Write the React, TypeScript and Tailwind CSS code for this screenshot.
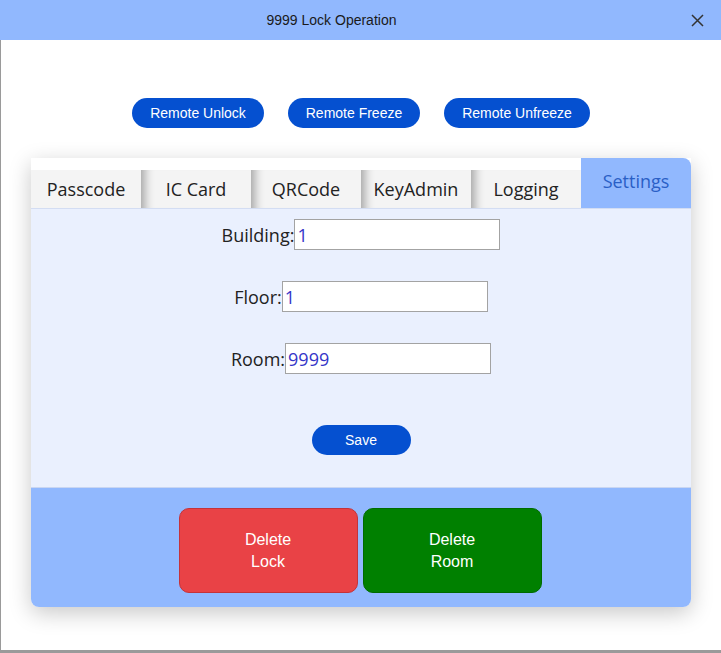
import { useState } from 'react';

const tabs = ['Passcode', 'IC Card', 'QRCode', 'KeyAdmin', 'Logging', 'Settings'];

export default function App() {
  const [active, setActive] = useState('Settings');
  const [building, setBuilding] = useState('1');
  const [floor, setFloor] = useState('1');
  const [room, setRoom] = useState('9999');

  const fields = [
    { label: 'Building:', value: building, set: setBuilding },
    { label: 'Floor:', value: floor, set: setFloor },
    { label: 'Room:', value: room, set: setRoom },
  ];

  return (
    <div className="w-[721px] h-[653px] bg-white flex flex-col font-['Liberation_Sans',Arial,sans-serif]">
      {/* Title bar */}
      <div className="h-10 shrink-0 bg-[#91b8fe] flex items-center">
        <div className="flex-1 text-center text-sm text-[#1a1a1a]">9999 Lock Operation</div>
        <div className="w-[58px] flex justify-end pr-[17px]">
          <svg width="13" height="13" viewBox="0 0 13 13" className="text-[#333]">
            <path d="M1 1 L12 12 M12 1 L1 12" stroke="currentColor" strokeWidth="1.5" />
          </svg>
        </div>
      </div>

      <div className="flex-1 flex flex-col border-l border-b-[3px] border-[#9a9a9a]">
        {/* Remote buttons */}
        <div className="flex justify-center gap-6 pt-[58px]">
          <button className="w-[132px] h-[30px] rounded-full bg-[#0550d0] text-white text-sm">Remote Unlock</button>
          <button className="w-[132px] h-[30px] rounded-full bg-[#0550d0] text-white text-sm">Remote Freeze</button>
          <button className="w-[146px] h-[30px] rounded-full bg-[#0550d0] text-white text-sm">Remote Unfreeze</button>
        </div>

        {/* Card */}
        <div className="mx-[30px] mt-[30px] flex flex-col rounded-b-lg shadow-[0_6px_22px_rgba(0,0,0,0.22)]">
          <div className="grid grid-cols-6 h-[50px] items-end font-['Open_Sans',sans-serif] text-lg">
            {tabs.map((t, i) =>
              t === active ? (
                <button
                  key={t}
                  onClick={() => setActive(t)}
                  className="h-[50px] bg-[#91b8fe] rounded-tr-lg text-[#2a5fc6] flex justify-center pt-[9px]"
                >
                  {t}
                </button>
              ) : (
                <button
                  key={t}
                  onClick={() => setActive(t)}
                  className={`h-[38px] bg-[#f4f4f4] text-[#222] flex items-center justify-center ${
                    i > 0 ? 'shadow-[inset_13px_0_10px_-9px_rgba(0,0,0,0.32)]' : ''
                  }`}
                >
                  {t}
                </button>
              )
            )}
          </div>

          <div className="bg-[#eaf0fe] border-t border-[#d3ddf3] h-[279px] flex flex-col items-center pt-[10px] font-['Open_Sans',sans-serif] text-lg text-[#222]">
            <div className="flex flex-col items-center gap-[31px]">
              {fields.map((f) => (
                <div key={f.label} className="flex items-center">
                  <span>{f.label}</span>
                  <input
                    value={f.value}
                    onChange={(e) => f.set(e.target.value)}
                    className="w-[206px] h-[31px] bg-white border border-[#a3a3a3] px-[2px] text-[#3434c8] outline-none"
                  />
                </div>
              ))}
            </div>
            <button className="mt-[51px] w-[99px] h-[30px] rounded-full bg-[#0550d0] text-white text-sm font-['Liberation_Sans',Arial,sans-serif]">
              Save
            </button>
          </div>

          <div className="bg-[#91b8fe] border-t border-[#c9d6f2] rounded-b-lg h-[120px] flex justify-center gap-[5px] pt-[20px] pr-[2px]">
            <button className="w-[179px] h-[85px] rounded-[10px] bg-[#e94246] border border-[#c4333a] text-white text-base leading-[22px]">
              Delete
              <br />
              Lock
            </button>
            <button className="w-[179px] h-[85px] rounded-[10px] bg-[#008000] border border-[#006b00] text-white text-base leading-[22px]">
              Delete
              <br />
              Room
            </button>
          </div>
        </div>
      </div>
    </div>
  );
}
